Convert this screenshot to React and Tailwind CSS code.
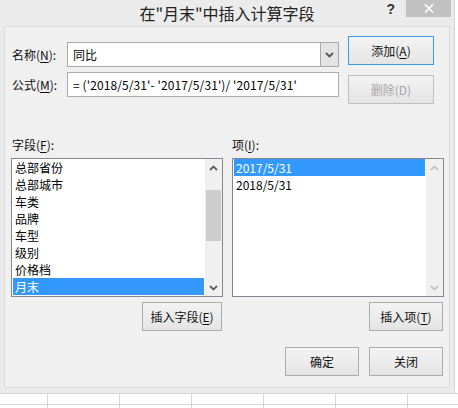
const font = { fontFamily: '"Noto Sans CJK SC", "Microsoft YaHei", sans-serif' };

const fields = ["总部省份", "总部城市", "车类", "品牌", "车型", "级别", "价格档", "月末"];
const items = ["2017/5/31", "2018/5/31"];

const Key = ({ children }) => <span className="underline underline-offset-2">{children}</span>;

const Button = ({ children, className = "", disabled, focused }) => (
  <div
    className={`flex h-[29px] items-center justify-center border bg-linear-to-b from-[#f3f3f3] to-[#e4e4e4] text-[12px] ${
      focused ? "border-[#3c9ae8]" : disabled ? "border-[#bfbfbf]" : "border-[#acacac]"
    } ${disabled ? "text-[#a6a6a6]" : "text-[#111]"} ${className}`}
  >
    {children}
  </div>
);

const Chevron = ({ up, color }) => (
  <svg width="9" height="6" viewBox="0 0 9 6">
    <path
      d={up ? "M1 5 L4.5 1.5 L8 5" : "M1 1 L4.5 4.5 L8 1"}
      fill="none"
      stroke={color}
      strokeWidth="1.8"
    />
  </svg>
);

const ListBox = ({ rows, selected, active }) => (
  <div className="flex h-[139px] w-[212px] border border-[#828790] bg-white">
    <div className="flex flex-1 flex-col pl-px pr-px">
      {rows.map((r, i) => (
        <div
          key={r}
          className={`h-[17px] pl-[2px] text-[12px] leading-[17px] ${
            i === selected ? "bg-[#3399ff] text-white" : "text-black"
          }`}
        >
          {r}
        </div>
      ))}
    </div>
    <div className="flex w-[17px] flex-col bg-[#f0f0f0]">
      <div className="flex h-[17px] items-center justify-center">
        <Chevron up color={active ? "#606060" : "#c2c2c2"} />
      </div>
      {active ? <div className="mx-px mt-[14px] h-[51px] bg-[#cdcdcd]" /> : null}
      <div className="flex-1" />
      <div className="flex h-[17px] items-center justify-center">
        <Chevron color={active ? "#606060" : "#c2c2c2"} />
      </div>
    </div>
  </div>
);

export default function App() {
  return (
    <div className="h-[408px] w-[458px] overflow-hidden bg-white" style={font}>
      <div className="h-[393px] w-[455px] border-r border-[#d4d4d4] bg-[#ebebeb]">
        {/* title bar */}
        <div className="grid h-[26px] grid-cols-[1fr_auto_1fr]">
          <div />
          <div className="pt-[1px] text-[16px] leading-[24px] text-[#222]">在"月末"中插入计算字段</div>
          <div className="flex items-start justify-end">
            <span
              className="mt-[1px] text-[14px] font-bold leading-[16px] text-[#333]"
              style={{ fontFamily: '"Liberation Sans", sans-serif' }}
            >
              ?
            </span>
            <div className="ml-[11px] mr-[3px] flex h-[17px] w-[45px] items-center justify-center bg-[#c1c1c1]">
              <svg width="10" height="9" viewBox="0 0 10 9">
                <path d="M1 0.5 L9 8.5 M9 0.5 L1 8.5" stroke="white" strokeWidth="1.6" />
              </svg>
            </div>
          </div>
        </div>

        {/* client panel */}
        <div className="mx-[4px] h-[362px] border border-[#dcdcdc] bg-[#f0f0f0]">
          <div className="flex pl-[7px] pt-[9px]">
            <div className="mt-[6px] flex flex-col gap-[5px]">
              <div className="flex h-[25px] items-center">
                <span className="w-[55px] text-[12px] text-[#111]">
                  名称(<Key>N</Key>):
                </span>
                <div className="flex h-[25px] w-[272px] border border-[#a9a9a9] bg-white">
                  <div className="flex-1 pl-[5px] text-[12px] leading-[23px] text-black">同比</div>
                  <div className="flex w-[18px] items-center justify-center border-l border-[#a9a9a9] bg-[#e3e3e3]">
                    <Chevron color="#555" />
                  </div>
                </div>
              </div>
              <div className="flex h-[25px] items-center">
                <span className="w-[55px] text-[12px] text-[#111]">
                  公式(<Key>M</Key>):
                </span>
                <div className="h-[25px] w-[272px] border border-[#abadb3] bg-white pl-[5px] text-[12px] leading-[23px] tracking-[0.1px] text-black">
                  = ('2018/5/31'- '2017/5/31')/ '2017/5/31'
                </div>
              </div>
            </div>
            <div className="ml-[9px] flex flex-col gap-[10px]">
              <Button focused className="w-[86px]">
                添加(<Key>A</Key>)
              </Button>
              <Button disabled className="w-[86px]">
                删除(D)
              </Button>
            </div>
          </div>

          {/* lists */}
          <div className="mt-[33px] flex gap-[9px] pl-[6px]">
            <div className="flex w-[212px] flex-col">
              <div className="h-[16px] pl-px text-[12px] leading-[16px] text-[#111]">
                字段(<Key>F</Key>):
              </div>
              <div className="mt-[5px]">
                <ListBox rows={fields} selected={7} active />
              </div>
              <div className="mt-[5px] flex justify-end pr-px">
                <Button className="w-[80px]">
                  插入字段(<Key>E</Key>)
                </Button>
              </div>
            </div>
            <div className="flex w-[212px] flex-col">
              <div className="h-[16px] text-[12px] leading-[16px] text-[#111]">
                项(<Key>I</Key>):
              </div>
              <div className="mt-[5px]">
                <ListBox rows={items} selected={0} />
              </div>
              <div className="mt-[5px] flex justify-end pr-px">
                <Button className="w-[74px]">
                  插入项(<Key>T</Key>)
                </Button>
              </div>
              <div className="mt-[16px] flex justify-end gap-[10px] pr-px">
                <Button className="w-[74px]">确定</Button>
                <Button className="w-[74px]">关闭</Button>
              </div>
            </div>
          </div>
        </div>
      </div>

      {/* spreadsheet grid behind */}
      <div className="flex flex-col">
        {[0, 1].map((r) => (
          <div key={r} className="flex h-[11px] border-t border-[#d4d4d4]">
            <div className="w-[48px] shrink-0 border-r border-[#d4d4d4]" />
            {[0, 1, 2, 3, 4, 5].map((c) => (
              <div key={c} className="w-[72px] shrink-0 border-r border-[#d4d4d4]" />
            ))}
          </div>
        ))}
      </div>
    </div>
  );
}
